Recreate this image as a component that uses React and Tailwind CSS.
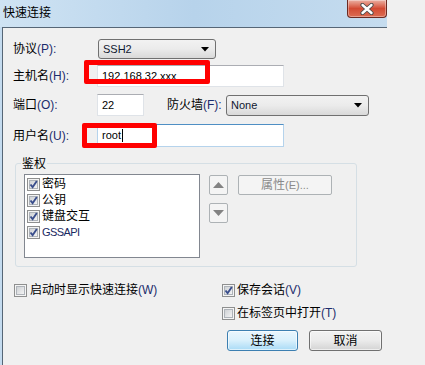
import React from "react";

const M = ({ children }) => <span className="text-[#1c2c6c]">{children}</span>;

const Check = ({ checked }) => (
  <span className="relative flex h-[13px] w-[13px] shrink-0 items-center justify-center border border-[#8e8f8f] bg-[#f4f4f4]">
    <span className="h-[9px] w-[9px] border border-[#aeb3b9] bg-linear-to-br from-[#cfd2d5] to-[#f3f3f4]" />
    {checked && (
      <svg className="absolute left-[0px] top-[0px]" width="11" height="11" viewBox="0 0 11 11">
        <path d="M2.5 5.5 L4.6 8.2 L8.8 2" fill="none" stroke="#3a4e8c" strokeWidth="1.9" />
      </svg>
    )}
  </span>
);

const Arrow = () => (
  <svg width="8" height="5" viewBox="0 0 8 5">
    <path d="M0 0 H8 L4 4.5 Z" fill="#000" />
  </svg>
);

const Combo = ({ value, cls }) => (
  <div
    className={`flex items-center justify-between rounded-[3px] border border-[#707070] bg-linear-to-b from-[#f2f2f2] via-[#ebebeb] to-[#d9d9d9] pl-[4px] pr-[6px] text-[11px] leading-[13px] text-[#101830] ${cls}`}
  >
    <span>{value}</span>
    <Arrow />
  </div>
);

const Input = ({ value, cls, focused, cursor }) => (
  <div
    className={`flex items-center bg-white pl-[4px] text-[11px] leading-[13px] text-black ${cls} ${
      focused
        ? "border border-[#b5d3ec] border-t-[#4f8fc4]"
        : "border border-[#dfe3e8] border-t-[#abadb3]"
    }`}
  >
    <span>{value}</span>
    {cursor && <span className="ml-[1px] h-[13px] w-[1px] bg-black" />}
  </div>
);

const SmallBtn = ({ up }) => (
  <div className="flex h-[20px] w-[19px] items-center justify-center rounded-[2px] border border-[#adb2b5] bg-[#f4f4f4]">
    <svg width="11" height="6" viewBox="0 0 11 6">
      {up ? <path d="M0 6 L5.5 0 L11 6 Z" fill="#838383" /> : <path d="M0 0 L11 0 L5.5 6 Z" fill="#838383" />}
    </svg>
  </div>
);

export default function App() {
  return (
    <div className="relative h-[365px] w-[425px] overflow-hidden bg-[#f0f0f0] font-['Liberation_Sans','Noto_Sans_CJK_SC',sans-serif] text-[12px] text-black">
      {/* title bar */}
      <div className="flex h-[27px] w-[387px] items-start justify-between bg-linear-to-r from-[#cfe3f3] via-[#b7d3eb] to-[#c5dcef]">
        <span className="pl-[3px] pt-[5px] text-[12px] leading-[16px] text-black">快速连接</span>
        <div className="flex h-[18px] w-[40px] items-center justify-center rounded-b-[4px] border border-t-0 border-[#6b2a22] bg-linear-to-b from-[#eab0a3] via-[#d24a33] to-[#dc6c52] shadow-[inset_0_0_0_1px_rgba(255,255,255,0.35)]">
          <svg width="14" height="12" viewBox="0 0 14 12">
            <path d="M2.5 2 L11.5 10 M11.5 2 L2.5 10" stroke="#4a4a4a" strokeWidth="4.2" strokeLinecap="round" />
            <path d="M2.5 2 L11.5 10 M11.5 2 L2.5 10" stroke="#ffffff" strokeWidth="2.4" strokeLinecap="round" />
          </svg>
        </div>
      </div>

      {/* body */}
      <div className="h-[338px] w-[387px] border-l-2 border-[#c4dbef]">
        <div className="flex h-full flex-col border-l border-t border-[#566676]">
          {/* row 1 */}
          <div className="mt-[11px] flex h-[20px] items-center">
            <span className="w-[95px] pl-[10px] leading-[16px]">
              协议<M>(P):</M>
            </span>
            <Combo value="SSH2" cls="h-[20px] w-[118px]" />
          </div>
          {/* row 2 */}
          <div className="mt-[6px] flex h-[22px] items-center">
            <span className="w-[94px] pl-[10px] leading-[16px]">
              主机名<M>(H):</M>
            </span>
            <Input value="192.168.32.xxx" cls="h-[22px] w-[187px]" />
          </div>
          {/* row 3 */}
          <div className="mt-[7px] flex h-[22px] items-center">
            <span className="w-[94px] pl-[10px] leading-[16px]">
              端口<M>(O):</M>
            </span>
            <Input value="22" cls="h-[22px] w-[47px]" />
            <span className="ml-[23px] w-[59px] leading-[16px]">
              防火墙<M>(F):</M>
            </span>
            <Combo value="None" cls="h-[21px] w-[143px]" />
          </div>
          {/* row 4 */}
          <div className="mt-[8px] flex h-[23px] items-center">
            <span className="w-[94px] pl-[10px] leading-[16px]">
              用户名<M>(U):</M>
            </span>
            <Input value="root" cls="h-[23px] w-[187px]" focused cursor />
          </div>

          {/* group */}
          <div className="ml-[12px] mt-[16px] flex h-[104px] w-[342px] flex-col rounded-[3px] border border-[#d5dfe5]">
            <span className="-mt-[8px] ml-[5px] h-[16px] self-start bg-[#f0f0f0] px-[1px] leading-[16px]">鉴权</span>
            <div className="ml-[8px] mt-[2px] flex items-start">
              <div className="flex h-[84px] w-[176px] flex-col border border-[#828790] bg-white pl-[2px] pt-[1px]">
                {[
                  ["密码", false],
                  ["公钥", false],
                  ["键盘交互", false],
                  ["GSSAPI", true],
                ].map(([t, latin]) => (
                  <div key={t} className="flex h-[16px] items-center gap-[2px]">
                    <Check checked />
                    {latin ? (
                      <span className="text-[11px] leading-[14px] tracking-[-0.6px] text-[#1a2a62]">{t}</span>
                    ) : (
                      <span className="leading-[16px]">{t}</span>
                    )}
                  </div>
                ))}
              </div>
              <div className="ml-[9px] mt-[1px] flex flex-col gap-[8px]">
                <SmallBtn up />
                <SmallBtn />
              </div>
              <div className="ml-[10px] mt-[1px] flex h-[20px] w-[94px] items-center justify-center rounded-[2px] border border-[#adb2b5] bg-[#f4f4f4] leading-[16px] text-[#8a8a8a]">
                属性<span className="text-[11px]">(E)...</span>
              </div>
            </div>
          </div>

          {/* bottom */}
          <div className="mt-[15px] flex">
            <div className="ml-[11px] flex h-[16px] w-[208px] items-center gap-[3px]">
              <Check />
              <span className="leading-[16px]">
                启动时显示快速连接<M>(W)</M>
              </span>
            </div>
            <div className="flex flex-col">
              <div className="flex h-[16px] items-center gap-[2px]">
                <Check checked />
                <span className="leading-[16px]">
                  保存会话<M>(V)</M>
                </span>
              </div>
              <div className="mt-[7px] flex h-[16px] items-center gap-[2px]">
                <Check />
                <span className="leading-[16px]">
                  在标签页中打开<M>(T)</M>
                </span>
              </div>
              <div className="ml-[5px] mt-[9px] flex gap-[11px]">
                <div className="flex h-[21px] w-[71px] items-center justify-center rounded-[3px] border border-[#3c7fb1] bg-linear-to-b from-[#eaf6fd] via-[#d9f0fc] to-[#a9dbf6] leading-[16px] shadow-[inset_0_0_0_1px_rgba(255,255,255,0.6)]">
                  连接
                </div>
                <div className="flex h-[21px] w-[73px] items-center justify-center rounded-[3px] border border-[#707070] bg-linear-to-b from-[#f2f2f2] via-[#ebebeb] to-[#d4d4d4] leading-[16px] shadow-[inset_0_0_0_1px_rgba(255,255,255,0.6)]">
                  取消
                </div>
              </div>
            </div>
          </div>
        </div>
      </div>

      {/* red annotation boxes */}
      <div className="absolute left-[84px] top-[60px] h-[24px] w-[126px] rounded-[2px] border-[5px] border-[#ff0000]" />
      <div className="absolute left-[82px] top-[123px] h-[25px] w-[75px] rounded-[2px] border-[5px] border-[#ff0000]" />
    </div>
  );
}
